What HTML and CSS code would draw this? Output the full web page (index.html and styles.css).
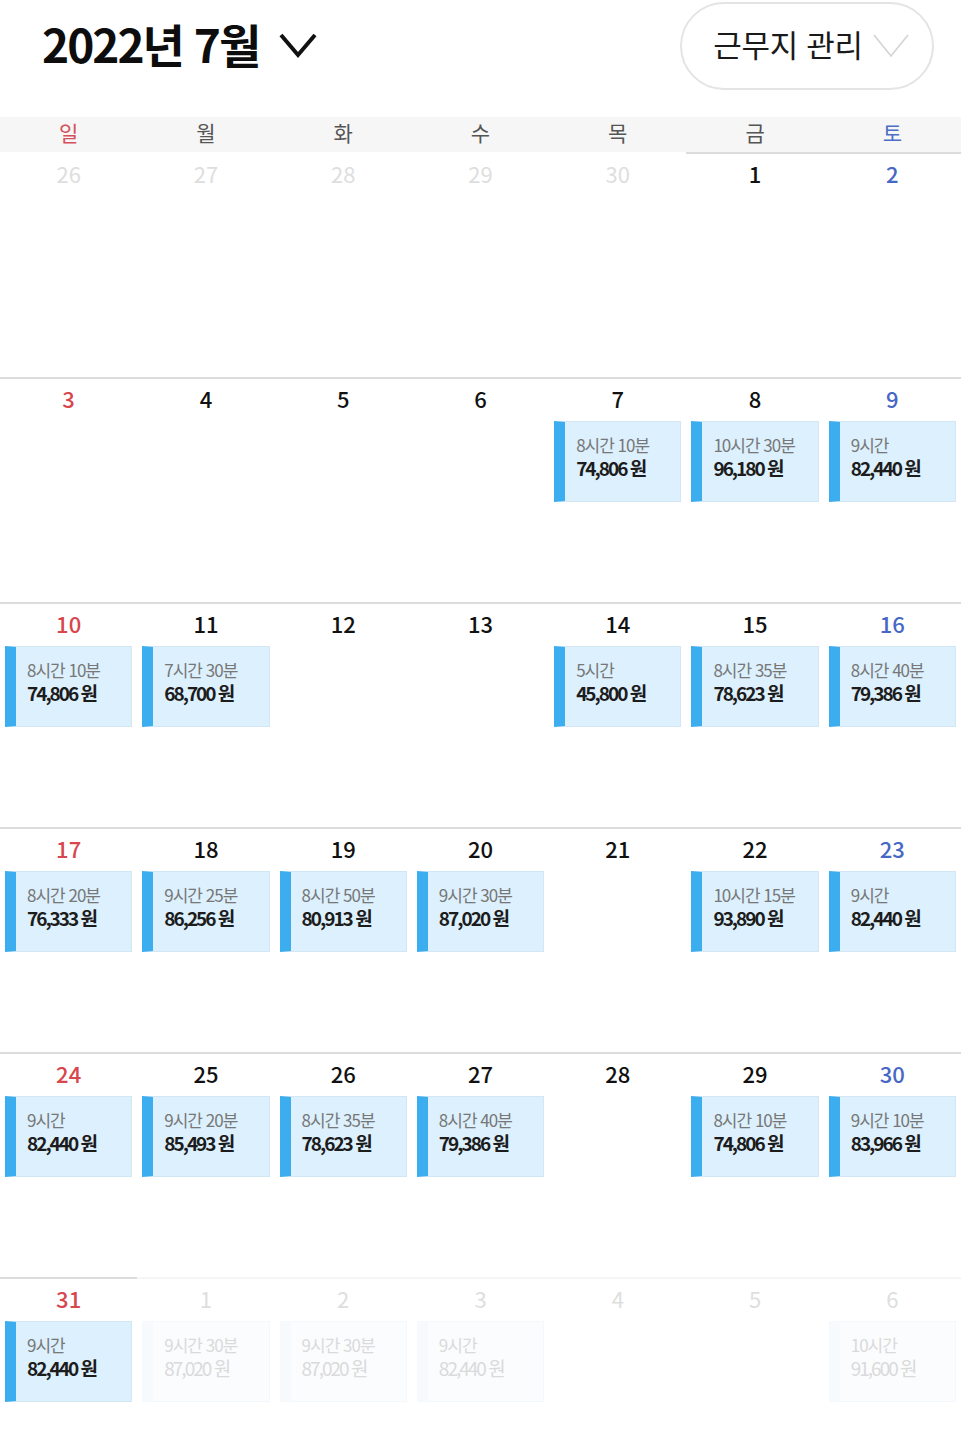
FILE: index.html
```html
<!DOCTYPE html>
<html lang="ko">
<head>
<meta charset="utf-8">
<link rel="stylesheet" href="styles.css">
</head>
<body>
<header class="top">
  <div class="title">
    <h1>2022년 7월</h1>
    <svg class="title-chev" width="40" height="28" viewBox="0 0 40 28"><polyline points="2,4 19,24 36,4" fill="none" stroke="#111" stroke-width="4" stroke-linejoin="miter"/></svg>
  </div>
  <button class="site">근무지 관리<svg class="site-chev" width="36" height="26" viewBox="0 0 36 26"><polyline points="1,2 18,23 35,2" fill="none" stroke="#d4d4d4" stroke-width="1.6"/></svg></button>
</header>
<div class="weekdays">
  <div class="wd sun">일</div><div class="wd">월</div><div class="wd">화</div><div class="wd">수</div><div class="wd">목</div><div class="wd">금</div><div class="wd sat">토</div>
</div>
<div class="grid">
  <div class="cell other first"><div class="num">26</div></div>
  <div class="cell other first"><div class="num">27</div></div>
  <div class="cell other first"><div class="num">28</div></div>
  <div class="cell other first"><div class="num">29</div></div>
  <div class="cell other first"><div class="num">30</div></div>
  <div class="cell"><div class="num">1</div></div>
  <div class="cell"><div class="num sat">2</div></div>

  <div class="cell"><div class="num sun">3</div></div>
  <div class="cell"><div class="num">4</div></div>
  <div class="cell"><div class="num">5</div></div>
  <div class="cell"><div class="num">6</div></div>
  <div class="cell"><div class="num">7</div><div class="ev"><div class="t">8시간 10분</div><div class="a">74,806 원</div></div></div>
  <div class="cell"><div class="num">8</div><div class="ev"><div class="t">10시간 30분</div><div class="a">96,180 원</div></div></div>
  <div class="cell"><div class="num sat">9</div><div class="ev"><div class="t">9시간</div><div class="a">82,440 원</div></div></div>

  <div class="cell"><div class="num sun">10</div><div class="ev"><div class="t">8시간 10분</div><div class="a">74,806 원</div></div></div>
  <div class="cell"><div class="num">11</div><div class="ev"><div class="t">7시간 30분</div><div class="a">68,700 원</div></div></div>
  <div class="cell"><div class="num">12</div></div>
  <div class="cell"><div class="num">13</div></div>
  <div class="cell"><div class="num">14</div><div class="ev"><div class="t">5시간</div><div class="a">45,800 원</div></div></div>
  <div class="cell"><div class="num">15</div><div class="ev"><div class="t">8시간 35분</div><div class="a">78,623 원</div></div></div>
  <div class="cell"><div class="num sat">16</div><div class="ev"><div class="t">8시간 40분</div><div class="a">79,386 원</div></div></div>

  <div class="cell"><div class="num sun">17</div><div class="ev"><div class="t">8시간 20분</div><div class="a">76,333 원</div></div></div>
  <div class="cell"><div class="num">18</div><div class="ev"><div class="t">9시간 25분</div><div class="a">86,256 원</div></div></div>
  <div class="cell"><div class="num">19</div><div class="ev"><div class="t">8시간 50분</div><div class="a">80,913 원</div></div></div>
  <div class="cell"><div class="num">20</div><div class="ev"><div class="t">9시간 30분</div><div class="a">87,020 원</div></div></div>
  <div class="cell"><div class="num">21</div></div>
  <div class="cell"><div class="num">22</div><div class="ev"><div class="t">10시간 15분</div><div class="a">93,890 원</div></div></div>
  <div class="cell"><div class="num sat">23</div><div class="ev"><div class="t">9시간</div><div class="a">82,440 원</div></div></div>

  <div class="cell"><div class="num sun">24</div><div class="ev"><div class="t">9시간</div><div class="a">82,440 원</div></div></div>
  <div class="cell"><div class="num">25</div><div class="ev"><div class="t">9시간 20분</div><div class="a">85,493 원</div></div></div>
  <div class="cell"><div class="num">26</div><div class="ev"><div class="t">8시간 35분</div><div class="a">78,623 원</div></div></div>
  <div class="cell"><div class="num">27</div><div class="ev"><div class="t">8시간 40분</div><div class="a">79,386 원</div></div></div>
  <div class="cell"><div class="num">28</div></div>
  <div class="cell"><div class="num">29</div><div class="ev"><div class="t">8시간 10분</div><div class="a">74,806 원</div></div></div>
  <div class="cell"><div class="num sat">30</div><div class="ev"><div class="t">9시간 10분</div><div class="a">83,966 원</div></div></div>

  <div class="cell"><div class="num sun">31</div><div class="ev"><div class="t">9시간</div><div class="a">82,440 원</div></div></div>
  <div class="cell other"><div class="num">1</div><div class="ev"><div class="t">9시간 30분</div><div class="a">87,020 원</div></div></div>
  <div class="cell other"><div class="num">2</div><div class="ev"><div class="t">9시간 30분</div><div class="a">87,020 원</div></div></div>
  <div class="cell other"><div class="num">3</div><div class="ev"><div class="t">9시간</div><div class="a">82,440 원</div></div></div>
  <div class="cell other"><div class="num">4</div></div>
  <div class="cell other"><div class="num">5</div></div>
  <div class="cell other"><div class="num">6</div><div class="ev"><div class="t">10시간</div><div class="a">91,600 원</div></div></div>
</div>
</body>
</html>
```
FILE: styles.css
```css
html, body {
  margin: 0;
  padding: 0;
  background: #fff;
}
body {
  width: 961px;
  height: 1440px;
  overflow: hidden;
  font-family: "Noto Sans CJK KR", "Noto Sans", sans-serif;
  color: #111;
}
.top {
  height: 90px;
  margin-bottom: 27px;
  padding: 0 27px 0 42px;
  display: flex;
  align-items: center;
  justify-content: space-between;
  box-sizing: border-box;
}
.title {
  display: flex;
  align-items: center;
  gap: 20px;
}
.title h1 {
  margin: 0 0 5px 0;
  font-size: 46px;
  font-weight: 700;
  letter-spacing: -2px;
  line-height: 56px;
  color: #0d0d0d;
}
.title-chev {
  margin-top: -1px;
}
.site {
  width: 254px;
  height: 88px;
  margin-top: 2px;
  border: 2px solid #e4e4e4;
  border-radius: 44px;
  background: #fff;
  font-family: "Noto Sans CJK KR", "Noto Sans", sans-serif;
  font-size: 31px;
  font-weight: 400;
  color: #1a1a1a;
  letter-spacing: -0.3px;
  display: flex;
  align-items: center;
  justify-content: center;
  gap: 10px;
  padding: 0 0 5px 8px;
}
.site-chev {
  margin-top: 4px;
}
.weekdays {
  display: grid;
  grid-template-columns: repeat(7, 1fr);
  height: 35px;
  background: #f6f6f6;
}
.wd {
  text-align: center;
  font-size: 21px;
  line-height: 30px;
  color: #555;
}
.wd.sun { color: #d5505a; }
.wd.sat { color: #4d6ec6; }
.grid {
  display: grid;
  grid-template-columns: repeat(7, 1fr);
  grid-auto-rows: 225px;
}
.cell {
  border-top: 2px solid #dcdcdc;
  padding-top: 5px;
  box-sizing: border-box;
}
.cell.other {
  border-top-color: #f5f5f5;
}
.cell.other.first {
  border-top-color: transparent;
}
.num {
  text-align: center;
  font-size: 22px;
  font-weight: 500;
  line-height: 28px;
  color: #111;
}
.num.sun { color: #d8464e; }
.num.sat { color: #4767c6; }
.other .num {
  color: #dedede;
  font-weight: 400;
}
.ev {
  margin: 9px 5px 0 5px;
  height: 81px;
  box-sizing: border-box;
  background: #dcf0fd;
  border: 1px solid #d2e6f4;
  border-left: 11px solid #3caef0;
  padding: 12px 0 0 11px;
}
.ev .t {
  font-size: 17px;
  line-height: 22px;
  color: #777;
  letter-spacing: -1px;
  white-space: nowrap;
}
.ev .a {
  font-size: 19px;
  line-height: 24px;
  font-weight: 700;
  color: #1c1c1c;
  letter-spacing: -2px;
  white-space: nowrap;
}
.other .ev {
  background: #fafcfe;
  border-color: #f4f8fb;
  border-left-color: #f6fafd;
}
.other .ev .t,
.other .ev .a {
  color: #dadada;
  font-weight: 400;
}
```
